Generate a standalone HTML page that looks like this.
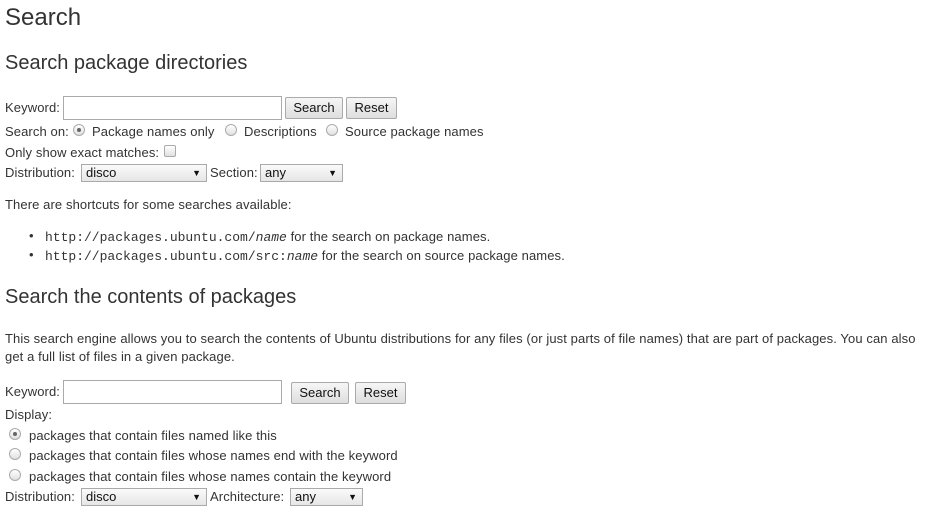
<!DOCTYPE html>
<html><head><meta charset="utf-8"><style>
body{margin:0;width:929px;height:516px;background:#fff;color:#333;font-family:"Liberation Sans",sans-serif;font-size:13px;position:relative;overflow:hidden}
.a{position:absolute;white-space:nowrap;line-height:16px;letter-spacing:0.1px}
h1,h2{position:absolute;margin:0;font-weight:normal;white-space:nowrap;color:#333}
h1{font-size:24px;left:5px;top:4px}
h2{font-size:20px;left:5px}
.in{position:absolute;border:1px solid #aaa;background:#fff;box-sizing:border-box;height:24px}
.bt{position:absolute;border:1px solid #aaa;background:linear-gradient(#f6f6f6,#dedede);box-sizing:border-box;height:22px;font-size:13px;text-align:center;line-height:20px;color:#111;border-radius:2px}
.sel{position:absolute;border:1px solid #aaa;background:linear-gradient(#fafafa,#e6e6e6);box-sizing:border-box;height:18px;font-size:13px;line-height:16px;padding-left:4px;color:#111}
.sel:after{content:"▼";position:absolute;right:5px;top:0;font-size:9px}
.r{position:absolute;width:12px;height:12px;border:1px solid #aaa;border-radius:50%;background:linear-gradient(#fff,#e0e0e0);box-sizing:border-box}
.r.on:after{content:"";position:absolute;left:3px;top:3px;width:4px;height:4px;border-radius:50%;background:#666}
.cb{position:absolute;width:12px;height:12px;border:1px solid #aaa;border-radius:2px;background:linear-gradient(#fff,#e0e0e0);box-sizing:border-box}
code{font-family:"Liberation Mono",monospace;font-size:13px;letter-spacing:0}
</style></head><body>
<h1>Search</h1>
<h2 style="top:52px">Search package directories</h2>
<div class="a" style="left:5px;top:100px">Keyword:</div>
<div class="in" style="left:63px;top:96px;width:219px"></div>
<div class="bt" style="left:285px;top:97px;width:58px">Search</div>
<div class="bt" style="left:346px;top:97px;width:51px">Reset</div>
<div class="a" style="left:5px;top:124px">Search on:</div>
<div class="r on" style="left:73px;top:124px"></div>
<div class="a" style="left:92px;top:124px">Package names only</div>
<div class="r" style="left:225px;top:124px"></div>
<div class="a" style="left:244px;top:124px">Descriptions</div>
<div class="r" style="left:326px;top:124px"></div>
<div class="a" style="left:345px;top:124px">Source package names</div>
<div class="a" style="left:5px;top:145px">Only show exact matches:</div>
<div class="cb" style="left:164px;top:145px"></div>
<div class="a" style="left:5px;top:165px">Distribution:</div>
<div class="sel" style="left:81px;top:164px;width:126px">disco</div>
<div class="a" style="left:210px;top:165px">Section:</div>
<div class="sel" style="left:260px;top:164px;width:83px">any</div>
<div class="a" style="left:5px;top:197px">There are shortcuts for some searches available:</div>
<div class="a" style="left:29px;top:228px">•</div>
<div class="a" style="left:45px;top:229px"><code>http://packages.ubuntu.com/<i>name</i></code> for the search on package names.</div>
<div class="a" style="left:29px;top:247px">•</div>
<div class="a" style="left:45px;top:248px"><code>http://packages.ubuntu.com/src:<i>name</i></code> for the search on source package names.</div>
<h2 style="top:286px">Search the contents of packages</h2>
<div class="a" style="left:5px;top:331px">This search engine allows you to search the contents of Ubuntu distributions for any files (or just parts of file names) that are part of packages. You can also</div>
<div class="a" style="left:5px;top:349px">get a full list of files in a given package.</div>
<div class="a" style="left:5px;top:384px">Keyword:</div>
<div class="in" style="left:63px;top:380px;width:219px"></div>
<div class="bt" style="left:291px;top:382px;width:58px">Search</div>
<div class="bt" style="left:355px;top:382px;width:51px">Reset</div>
<div class="a" style="left:5px;top:407px">Display:</div>
<div class="r on" style="left:9px;top:428px"></div>
<div class="a" style="left:29px;top:428px">packages that contain files named like this</div>
<div class="r" style="left:9px;top:448px"></div>
<div class="a" style="left:29px;top:448px">packages that contain files whose names end with the keyword</div>
<div class="r" style="left:9px;top:469px"></div>
<div class="a" style="left:29px;top:469px">packages that contain files whose names contain the keyword</div>
<div class="a" style="left:5px;top:489px">Distribution:</div>
<div class="sel" style="left:81px;top:488px;width:126px">disco</div>
<div class="a" style="left:210px;top:489px">Architecture:</div>
<div class="sel" style="left:290px;top:488px;width:73px">any</div>
</body></html>
